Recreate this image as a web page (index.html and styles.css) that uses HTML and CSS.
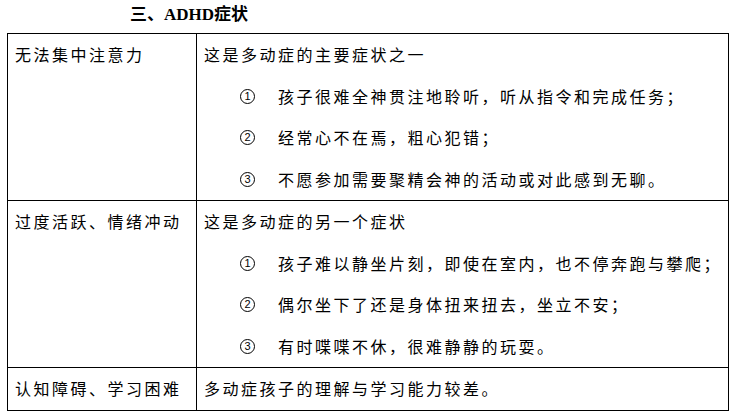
FILE: index.html
```html
<!DOCTYPE html>
<html lang="zh">
<head>
<meta charset="utf-8">
<link rel="stylesheet" href="styles.css">
</head>
<body>
<div class="page">
  <h2 class="title">三、<span class="latin">ADHD</span>症状</h2>
  <table class="sym">
    <tr class="r4">
      <td class="k">无法集中注意力</td>
      <td class="v">
        <div class="line">这是多动症的主要症状之一</div>
        <div class="item"><span class="n"><span class="c">1</span></span><span>孩子很难全神贯注地聆听，听从指令和完成任务；</span></div>
        <div class="item"><span class="n"><span class="c">2</span></span><span>经常心不在焉，粗心犯错；</span></div>
        <div class="item"><span class="n"><span class="c">3</span></span><span>不愿参加需要聚精会神的活动或对此感到无聊。</span></div>
      </td>
    </tr>
    <tr class="r4">
      <td class="k">过度活跃、情绪冲动</td>
      <td class="v">
        <div class="line">这是多动症的另一个症状</div>
        <div class="item"><span class="n"><span class="c">1</span></span><span>孩子难以静坐片刻，即使在室内，也不停奔跑与攀爬；</span></div>
        <div class="item"><span class="n"><span class="c">2</span></span><span>偶尔坐下了还是身体扭来扭去，坐立不安；</span></div>
        <div class="item"><span class="n"><span class="c">3</span></span><span>有时喋喋不休，很难静静的玩耍。</span></div>
      </td>
    </tr>
    <tr>
      <td class="k">认知障碍、学习困难</td>
      <td class="v"><div class="line">多动症孩子的理解与学习能力较差。</div></td>
    </tr>
  </table>
</div>
</body>
</html>
```

FILE: styles.css
```css
html, body {
  margin: 0;
  padding: 0;
  background: #fff;
}
body {
  font-family: "Noto Sans CJK SC", "Noto Sans", sans-serif;
  color: #000;
}
.page {
  padding: 0 0 0 7px;
}
.title {
  margin: 0 0 7px 0;
  padding-left: 123px;
  height: 26px;
  line-height: 26px;
  font-size: 17px;
  font-weight: bold;
  font-family: "Noto Sans CJK SC", sans-serif;
}
.title .latin {
  font-family: "Liberation Serif", serif;
  font-weight: bold;
  font-size: 17px;
}
.sym {
  border-collapse: collapse;
  width: 722px;
  table-layout: fixed;
}
.sym td {
  border: 1px solid #000;
  padding: 0;
  vertical-align: top;
  font-size: 16px;
  letter-spacing: 2.5px;
  line-height: 41.5px;
}
.sym td.k {
  width: 181px;
  padding-left: 7px;
}
.sym td.v {
  padding-left: 7px;
}
.item {
  display: flex;
  align-items: center;
  padding-left: 36px;
}
.item .n {
  width: 38px;
  flex: none;
  letter-spacing: 0;
  display: flex;
  align-items: center;
}
.item .c {
  box-sizing: border-box;
  width: 15px;
  height: 15px;
  border: 1px solid #000;
  border-radius: 50%;
  font-family: "Liberation Sans", sans-serif;
  font-size: 11px;
  line-height: 13px;
  text-align: center;
}
```
